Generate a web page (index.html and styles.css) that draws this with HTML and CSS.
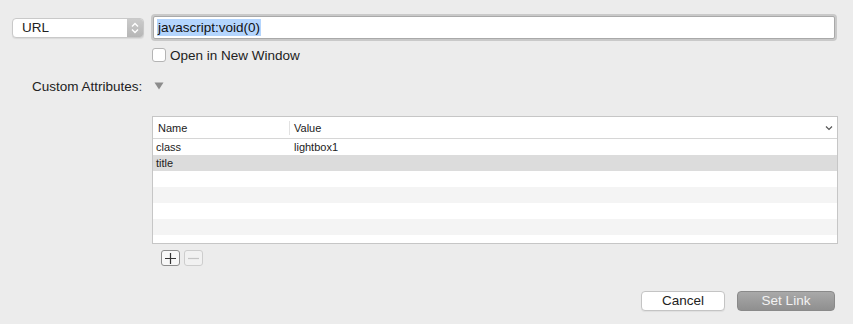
FILE: index.html
```html
<!DOCTYPE html>
<html lang="en">
<head>
  <meta charset="UTF-8">
  <title>Link Settings</title>
  <link rel="stylesheet" href="styles.css">
</head>
<body>
  <div class="dialog">
    <div class="row row-url">
      <div class="label-cell">
        <div class="popup">
          <span class="popup-text">URL</span>
          <span class="stepper">
            <svg width="8" height="12" viewBox="0 0 8 12">
              <path d="M1 4.5 L4 1.5 L7 4.5 M1 7.5 L4 10.5 L7 7.5" fill="none" stroke="#fff" stroke-width="1.4"/>
            </svg>
          </span>
        </div>
      </div>
      <div class="field">
        <span class="selected-text">javascript:void(0)</span>
      </div>
    </div>

    <div class="row row-check">
      <div class="label-cell"></div>
      <label class="check">
        <span class="box"></span>
        <span>Open in New Window</span>
      </label>
    </div>

    <div class="row row-custom">
      <div class="label-cell label-text">Custom Attributes:</div>
      <svg class="disclosure" width="10" height="8" viewBox="0 0 10 8">
        <path d="M0.5 0.5 L9.5 0.5 L5 7.5 Z" fill="#8c8c8c"/>
      </svg>
    </div>

    <div class="row row-table">
      <div class="label-cell"></div>
      <div class="attr-table">
        <div class="table-head">
          <div class="col-name">Name</div>
          <div class="col-value">Value</div>
          <svg class="head-chevron" width="8" height="6" viewBox="0 0 8 6">
            <path d="M1 1.5 L4 4.5 L7 1.5" fill="none" stroke="#555" stroke-width="1.2"/>
          </svg>
        </div>
        <div class="table-body">
          <div class="table-row">
            <div class="col-name">class</div>
            <div class="col-value">lightbox1</div>
          </div>
          <div class="table-row selected">
            <div class="col-name">title</div>
            <div class="col-value"></div>
          </div>
          <div class="table-row"></div>
          <div class="table-row alt"></div>
          <div class="table-row"></div>
          <div class="table-row alt"></div>
          <div class="table-row"></div>
        </div>
      </div>
    </div>

    <div class="row row-tools">
      <div class="label-cell"></div>
      <div class="tools">
        <span class="tool-btn">
          <svg width="11" height="11" viewBox="0 0 11 11"><path d="M5.5 0 V11 M0 5.5 H11" stroke="#333" stroke-width="1.2"/></svg>
        </span>
        <span class="tool-btn disabled">
          <svg width="11" height="11" viewBox="0 0 11 11"><path d="M0 5.5 H11" stroke="#c4c4c4" stroke-width="1.2"/></svg>
        </span>
      </div>
    </div>

    <div class="footer">
      <button class="btn btn-cancel">Cancel</button>
      <button class="btn btn-primary">Set Link</button>
    </div>
  </div>
</body>
</html>
```

FILE: styles.css
```css
* {
  box-sizing: border-box;
  margin: 0;
  padding: 0;
}

body {
  font-family: "Liberation Sans", Arial, sans-serif;
  font-size: 13.5px;
  background: #ececec;
  color: #222;
  width: 853px;
  height: 324px;
  overflow: hidden;
}

.dialog {
  padding: 16px 15px 0 0;
}

.row {
  display: flex;
  align-items: center;
}

.label-cell {
  width: 152px;
  flex-shrink: 0;
}

/* url row */
.row-url .label-cell {
  padding-left: 12px;
  padding-right: 8px;
}

.popup {
  display: flex;
  height: 20px;
  width: 132px;
  background: #fff;
  border: 1px solid #c9c9c9;
  border-radius: 4px;
  box-shadow: 0 1px 1px rgba(0, 0, 0, 0.08);
  overflow: hidden;
}

.popup-text {
  flex: 1;
  padding-left: 9px;
  line-height: 18px;
}

.stepper {
  width: 16px;
  background: linear-gradient(#cbcbcb, #b6b6b6);
  display: flex;
  align-items: center;
  justify-content: center;
}

.field {
  flex: 1;
  height: 23px;
  margin-left: 1px;
  margin-right: 3px;
  background: #fff;
  border: 1px solid #a9a9a9;
  box-shadow: 0 0 0 2px #c9c9c9;
  border-radius: 2px;
  display: flex;
  align-items: center;
  padding-left: 3px;
}

.selected-text {
  background: #b4d5fd;
  color: #111;
  font-size: 13.5px;
  line-height: 17px;
  padding: 0 1px;
}

/* checkbox row */
.row-check {
  margin-top: 8px;
  height: 16px;
}

.check {
  display: flex;
  align-items: center;
  gap: 4px;
}

.box {
  width: 14px;
  height: 14px;
  background: #fff;
  border: 1px solid #b4b4b4;
  border-radius: 3px;
}

/* custom attributes */
.row-custom {
  margin-top: 14px;
  height: 18px;
}

.label-text {
  padding-left: 32px;
}

.disclosure {
  margin-left: 2px;
}

/* table */
.row-table {
  margin-top: 21px;
  align-items: flex-start;
}

.attr-table {
  flex: 1;
  height: 128px;
  background: #fff;
  border: 1px solid #c6c6c6;
  font-size: 11px;
  color: #222;
}

.table-head {
  display: flex;
  align-items: center;
  height: 22px;
  border-bottom: 1px solid #d6d6d6;
  position: relative;
}

.table-head .col-name {
  width: 137px;
  padding-left: 5px;
  border-right: 1px solid #e2e2e2;
  line-height: 14px;
}

.table-head .col-value {
  padding-left: 4px;
}

.head-chevron {
  position: absolute;
  right: 4px;
  top: 8px;
}

.table-body {
  height: 104px;
  overflow: hidden;
}

.table-row {
  display: flex;
  height: 16px;
  line-height: 16px;
}

.table-row .col-name {
  width: 138px;
  padding-left: 3px;
}

.table-row .col-value {
  padding-left: 3px;
}

.table-row.selected {
  background: #dcdcdc;
}

.table-row.alt {
  background: #f4f4f4;
}

/* +/- */
.row-tools {
  margin-top: 6px;
}

.tools {
  display: flex;
  gap: 4px;
  padding-left: 9px;
}

.tool-btn {
  width: 19px;
  height: 16px;
  border: 1px solid #8c8c8c;
  border-radius: 3px;
  background: #f7f7f7;
  display: flex;
  align-items: center;
  justify-content: center;
}

.tool-btn.disabled {
  border-color: #cdcdcd;
  background: #f1f1f1;
}

/* footer */
.footer {
  display: flex;
  justify-content: flex-end;
  gap: 12px;
  margin-top: 25px;
  padding-right: 3px;
}

.btn {
  font-family: "Liberation Sans", Arial, sans-serif;
  font-size: 13.5px;
  height: 20px;
  border-radius: 4px;
  line-height: 18px;
}

.btn-cancel {
  width: 84px;
  background: #fff;
  color: #222;
  border: 1px solid #c4c4c4;
  box-shadow: 0 1px 1px rgba(0, 0, 0, 0.06);
}

.btn-primary {
  width: 98px;
  background: linear-gradient(#a9a9a9, #8f8f8f);
  color: #f2f2f2;
  border: 1px solid #8a8a8a;
}
```
